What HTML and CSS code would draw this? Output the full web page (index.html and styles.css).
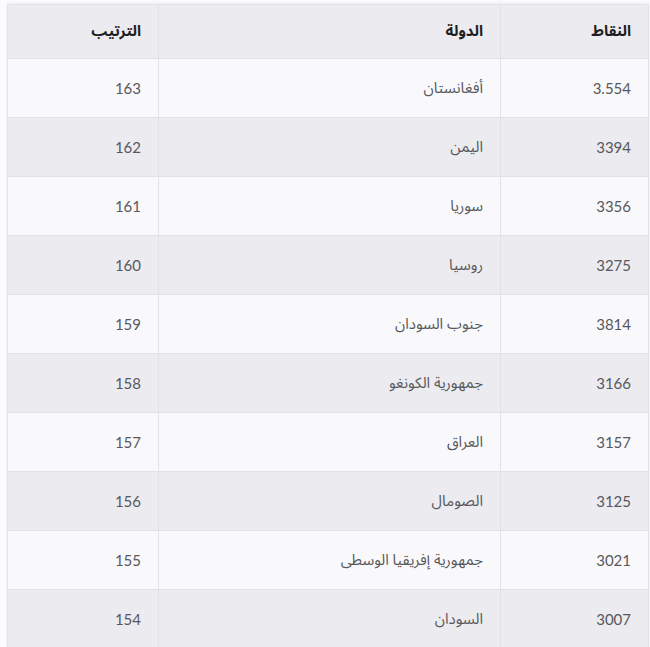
FILE: index.html
```html
<!DOCTYPE html>
<html lang="ar" dir="rtl">
<head>
<meta charset="utf-8">
<link rel="stylesheet" href="styles.css">
</head>
<body>
<div class="wrap">
<table class="rank-table">
<thead>
<tr><th class="c-points">النقاط</th><th class="c-country">الدولة</th><th class="c-rank">الترتيب</th></tr>
</thead>
<tbody>
<tr><td>3.554</td><td>أفغانستان</td><td>163</td></tr>
<tr><td>3394</td><td>اليمن</td><td>162</td></tr>
<tr><td>3356</td><td>سوريا</td><td>161</td></tr>
<tr><td>3275</td><td>روسيا</td><td>160</td></tr>
<tr><td>3814</td><td>جنوب السودان</td><td>159</td></tr>
<tr><td>3166</td><td>جمهورية الكونغو</td><td>158</td></tr>
<tr><td>3157</td><td>العراق</td><td>157</td></tr>
<tr><td>3125</td><td>الصومال</td><td>156</td></tr>
<tr><td>3021</td><td>جمهورية إفريقيا الوسطى</td><td>155</td></tr>
<tr><td>3007</td><td>السودان</td><td>154</td></tr>
</tbody>
</table>
</div>
</body>
</html>
```
FILE: styles.css
```css
html, body {
  margin: 0;
  padding: 0;
  background: #fbfbfd;
}
.wrap {
  padding: 4px 1px 0 7px;
}
.rank-table {
  width: 642px;
  border-collapse: collapse;
  font-family: Lato, "Noto Sans Arabic", "DejaVu Sans", sans-serif;
  font-size: 16px;
  box-shadow: 0 -1px 3px rgba(0,0,0,0.06);
}
.rank-table th,
.rank-table td {
  text-align: right;
  padding: 0 17px;
  border: 1px solid #e2e2e7;
  vertical-align: middle;
}
.rank-table thead tr {
  height: 54px;
  background: #ebebf0;
}
.rank-table th {
  font-weight: 700;
  color: #1e1e22;
  font-size: 15px;
  padding-bottom: 2px;
}
.c-points { width: 113px; }
.c-rank { width: 116px; }
.rank-table tbody tr {
  height: 59px;
}
.rank-table tbody tr:nth-child(odd) {
  background: #f9f9fb;
}
.rank-table tbody tr:nth-child(even) {
  background: #ebebf0;
}
.rank-table td {
  color: #58585c;
  font-size: 15px;
}
```
